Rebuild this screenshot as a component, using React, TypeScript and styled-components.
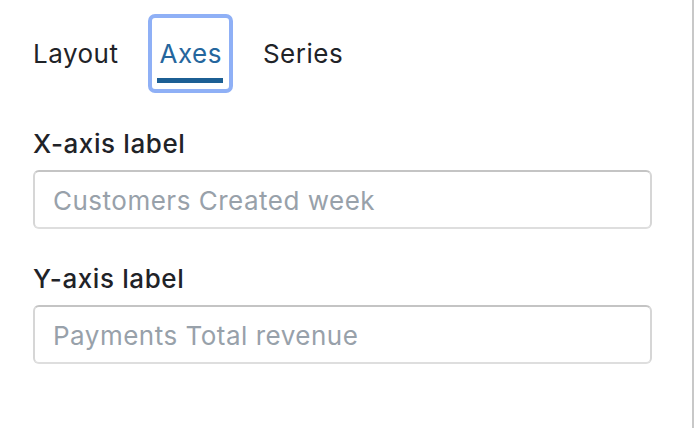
import React, { useState } from "react";
import styled, { createGlobalStyle } from "styled-components";

const Global = createGlobalStyle`
  html, body { margin: 0; padding: 0; background: #ffffff; }
  body { font-family: Inter, "Noto Sans", "Liberation Sans", sans-serif; }
  * { box-sizing: border-box; }
`;

const Panel = styled.div`
  width: 694px;
  height: 428px;
  border-right: 2px solid #c8c8c8;
  background: #ffffff;
  padding: 18px 40px 0 33px;
  display: flex;
  flex-direction: column;
`;

const TabList = styled.div`
  display: flex;
  gap: 26px;
  margin-left: -8px;
`;

const Tab = styled.button<{ $active?: boolean }>`
  position: relative;
  border: none;
  background: transparent;
  font-family: inherit;
  font-size: 26px;
  letter-spacing: 0.5px;
  line-height: 32px;
  padding: 20px 7px 19px 8px;
  color: ${(p) => (p.$active ? "#25669d" : "#1f2328")};
  border-radius: 3px;
  cursor: pointer;
  outline: ${(p) => (p.$active ? "4px solid #8fb0f6" : "none")};
  outline-offset: 0;
  &::after {
    content: "";
    display: ${(p) => (p.$active ? "block" : "none")};
    position: absolute;
    left: 5px;
    right: 6px;
    bottom: 6px;
    height: 5px;
    background: #1c5f94;
  }
`;

const Fields = styled.div`
  display: flex;
  flex-direction: column;
  gap: 35px;
  margin-top: 40px;
`;

const Field = styled.label`
  display: flex;
  flex-direction: column;
  gap: 12px;
`;

const LabelText = styled.span`
  font-size: 26px;
  letter-spacing: 0.6px;
  line-height: 29px;
  font-weight: 500;
  color: #1f2328;
`;

const Input = styled.input`
  width: 100%;
  height: 59px;
  border: 2px solid #d6d6d6;
  border-top-color: #c4c4c4;
  border-bottom-color: #dedede;
  border-radius: 6px;
  padding: 2px 18px 0;
  font-family: inherit;
  font-size: 26px;
  letter-spacing: 0.5px;
  color: #1f2328;
  background: #ffffff;
  outline: none;
  &::placeholder {
    color: #98a1aa;
  }
`;

export default function App() {
  const [tab, setTab] = useState("Axes");
  return (
    <>
      <Global />
      <Panel>
        <TabList>
          {["Layout", "Axes", "Series"].map((t) => (
            <Tab key={t} $active={tab === t} onClick={() => setTab(t)}>
              {t}
            </Tab>
          ))}
        </TabList>
        <Fields>
          <Field>
            <LabelText>X-axis label</LabelText>
            <Input placeholder="Customers Created week" />
          </Field>
          <Field>
            <LabelText>Y-axis label</LabelText>
            <Input placeholder="Payments Total revenue" />
          </Field>
        </Fields>
      </Panel>
    </>
  );
}
